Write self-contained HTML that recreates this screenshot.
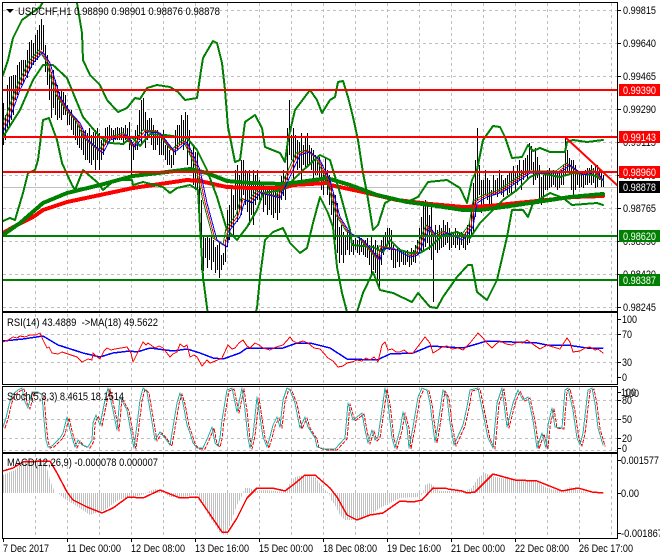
<!DOCTYPE html>
<html><head><meta charset="utf-8"><style>
html,body{margin:0;padding:0;background:#fff;width:660px;height:560px;overflow:hidden}
svg{display:block}
text{font-family:"Liberation Sans",sans-serif;font-size:11px;fill:#000}
.w{fill:#fff}
.l{fill:none;stroke-linejoin:round;stroke-linecap:round;shape-rendering:crispEdges}
</style></head><body>
<svg width="660" height="560" viewBox="0 0 660 560" xmlns="http://www.w3.org/2000/svg">
<defs>
<clipPath id="cm"><rect x="3" y="3" width="614" height="308"/></clipPath>
<clipPath id="cs"><rect x="3" y="387" width="614" height="65"/></clipPath>
<pattern id="hp" x="3" y="0" width="2" height="10" patternUnits="userSpaceOnUse"><rect width="1" height="10" fill="#c0c0c0"/></pattern>
<polyline id="fast" class="l" points="3,132 10,118 20,90 33,63 43,52 50,63 60,97 70,112 80,123 88,140 103,153 110,140 127,135 135,147 147,132 160,133 175,152 187,142 197,163 200,170 207,203 217,240 227,247 230,230 240,217 245,200 252,203 260,193 280,198 287,183 300,155 310,152 320,160 328,177 330,180 340,217 350,233 363,240 380,260 383,248 397,250 410,257 418,255 430,227 437,237 447,233 463,240 473,227 477,203 487,197 503,192 520,180 530,173 560,173 570,165 583,175 597,172 603,180"/>
<polyline id="st" class="l" points="3,427 6,418 9,405 12,395 18,390 22,388 25,402 28,408 32,392 38,392 42,395 44,420 46,440 48,447 52,446 56,442 60,438 63,433 67,417 70,430 72,437 75,447 78,440 82,445 88,447 92,440 93,423 96,415 100,425 105,400 108,388 113,410 117,430 120,397 127,410 132,438 134,448 137,425 140,400 143,388 147,392 150,410 155,440 160,432 165,438 170,445 173,427 177,403 180,393 183,403 187,425 190,433 193,443 197,448 203,448 208,437 212,427 215,443 218,446 220,438 222,420 227,390 232,388 237,412 242,388 245,410 248,438 250,448 253,435 257,397 260,417 263,437 267,447 270,437 273,425 277,417 280,427 283,400 287,388 290,390 295,403 300,428 305,417 308,427 315,438 317,447 325,449 335,449 345,438 348,403 353,420 362,413 365,430 368,443 372,430 375,440 378,437 382,410 385,388 388,403 392,438 395,448 400,430 403,412 407,427 409,448 413,427 418,397 422,388 427,390 430,403 433,427 435,442 438,425 443,390 447,397 450,423 454,445 463,425 467,407 470,390 478,388 483,413 488,438 493,448 497,403 502,388 507,427 513,403 518,390 523,400 528,397 533,420 537,448 542,433 546,448 548,425 552,408 555,427 562,428 565,390 568,388 573,410 577,438 580,445 583,433 588,390 592,388 595,403 598,428 603,445"/>
</defs>
<rect width="660" height="560" fill="#fff"/>

<!-- grid -->
<g stroke="#c0c0c0" stroke-width="1" stroke-dasharray="3 3" fill="none">
<path d="M35.5 3V311M67.5 3V311M99.5 3V311M131.5 3V311M163.5 3V311M195.5 3V311M227.5 3V311M259.5 3V311M291.5 3V311M323.5 3V311M355.5 3V311M387.5 3V311M419.5 3V311M451.5 3V311M483.5 3V311M515.5 3V311M547.5 3V311M579.5 3V311M611.5 3V311"/>
<path d="M3 10.5H617M3 43.5H617M3 76.5H617M3 109.5H617M3 142.5H617M3 175.5H617M3 208.5H617M3 241.5H617M3 274.5H617M3 307.5H617"/>
<path d="M35.5 314V384M67.5 314V384M99.5 314V384M131.5 314V384M163.5 314V384M195.5 314V384M227.5 314V384M259.5 314V384M291.5 314V384M323.5 314V384M355.5 314V384M387.5 314V384M419.5 314V384M451.5 314V384M483.5 314V384M515.5 314V384M547.5 314V384M579.5 314V384M611.5 314V384"/>
<path d="M3 334.5H617M3 362.5H617"/>
<path d="M35.5 387V452M67.5 387V452M99.5 387V452M131.5 387V452M163.5 387V452M195.5 387V452M227.5 387V452M259.5 387V452M291.5 387V452M323.5 387V452M355.5 387V452M387.5 387V452M419.5 387V452M451.5 387V452M483.5 387V452M515.5 387V452M547.5 387V452M579.5 387V452M611.5 387V452"/>
<path d="M3 400.5H617M3 419.5H617M3 438.5H617M3 450.5H617"/>
<path d="M35.5 454V538M67.5 454V538M99.5 454V538M131.5 454V538M163.5 454V538M195.5 454V538M227.5 454V538M259.5 454V538M291.5 454V538M323.5 454V538M355.5 454V538M387.5 454V538M419.5 454V538M451.5 454V538M483.5 454V538M515.5 454V538M547.5 454V538M579.5 454V538M611.5 454V538"/>
</g>
<path d="M3 187.5H617" stroke="#c0c0c0" stroke-width="1"/>

<g clip-path="url(#cm)">
<!-- price bars -->
<path stroke="#000" stroke-width="1" fill="none" d="M3.5 103V145M5.5 115V140M7.5 85V128M9.5 77V125M11.5 76V120M13.5 75V115M15.5 75V100M17.5 65V95M19.5 62V90M21.5 60V85M23.5 60V82M25.5 60V76M27.5 50V78M29.5 42V70M31.5 40V68M33.5 43V65M35.5 35V62M37.5 30V60M39.5 25V55M41.5 19V50M43.5 25V52M45.5 45V72M47.5 55V85M49.5 65V100M51.5 72V118M53.5 70V108M55.5 80V115M57.5 85V120M59.5 92V118M61.5 90V120M63.5 92V115M65.5 95V115M67.5 105V125M69.5 110V125M71.5 110V130M73.5 118V135M75.5 120V140M77.5 125V145M79.5 125V148M81.5 128V150M83.5 130V155M85.5 130V160M87.5 133V160M89.5 128V163M91.5 135V165M93.5 132V160M95.5 130V170M97.5 128V160M99.5 133V170M101.5 140V160M103.5 140V155M105.5 128V145M107.5 127V145M109.5 125V142M111.5 128V140M113.5 130V142M115.5 128V140M117.5 127V140M119.5 128V140M121.5 127V140M123.5 128V145M125.5 125V140M127.5 128V142M129.5 122V150M131.5 140V175M133.5 145V160M135.5 130V150M137.5 125V150M139.5 110V140M141.5 100V145M143.5 98V130M145.5 112V148M147.5 120V140M149.5 118V130M151.5 118V145M153.5 125V150M155.5 130V150M157.5 130V145M159.5 135V155M161.5 138V155M163.5 130V155M165.5 145V160M167.5 145V165M169.5 150V165M171.5 155V168M173.5 150V165M175.5 130V155M177.5 125V150M179.5 125V145M181.5 115V145M183.5 120V150M185.5 112V142M187.5 115V165M189.5 130V155M191.5 150V170M193.5 145V185M195.5 152V190M197.5 150V195M199.5 170V215M201.5 200V270M203.5 235V271M205.5 238V258M207.5 235V268M209.5 238V260M211.5 237V270M213.5 240V262M215.5 247V273M217.5 245V270M219.5 243V278M221.5 255V270M223.5 253V265M225.5 240V262M227.5 210V247M229.5 205V240M231.5 187V227M233.5 195V235M235.5 170V210M237.5 165V222M239.5 175V212M241.5 160V215M243.5 160V195M245.5 170V205M247.5 172V212M249.5 170V225M251.5 185V215M253.5 170V225M255.5 175V205M257.5 170V200M259.5 180V200M261.5 185V200M263.5 185V212M265.5 190V205M267.5 188V215M269.5 190V210M271.5 190V215M273.5 190V218M275.5 190V213M277.5 190V220M279.5 183V213M281.5 176V200M283.5 170V196M285.5 175V200M287.5 128V180M289.5 100V155M291.5 135V160M293.5 128V183M295.5 135V160M297.5 140V170M299.5 142V168M301.5 133V180M303.5 145V165M305.5 137V167M307.5 133V167M309.5 145V165M311.5 148V170M313.5 150V180M315.5 155V175M317.5 160V175M319.5 157V177M321.5 165V190M323.5 170V195M325.5 157V185M327.5 170V195M329.5 175V205M331.5 185V215M333.5 193V227M335.5 195V240M337.5 203V253M339.5 227V263M341.5 225V255M343.5 232V263M345.5 235V255M347.5 230V250M349.5 233V255M351.5 235V252M353.5 240V255M355.5 238V250M357.5 240V253M359.5 237V255M361.5 238V252M363.5 240V255M365.5 240V257M367.5 238V258M369.5 245V265M371.5 237V277M373.5 245V270M375.5 240V273M377.5 245V280M379.5 250V290M381.5 240V265M383.5 236V255M385.5 232V250M387.5 228V243M389.5 228V250M391.5 230V260M393.5 245V268M395.5 250V268M397.5 248V262M399.5 248V267M401.5 250V262M403.5 250V265M405.5 252V265M407.5 250V262M409.5 255V267M411.5 248V265M413.5 250V262M415.5 245V263M417.5 240V255M419.5 228V253M421.5 217V253M423.5 205V250M425.5 200V247M427.5 202V243M429.5 215V250M431.5 205V260M433.5 237V302M435.5 225V250M437.5 230V253M439.5 225V250M441.5 228V248M443.5 220V247M445.5 225V245M447.5 222V243M449.5 228V250M451.5 232V248M453.5 232V245M455.5 228V248M457.5 233V245M459.5 233V250M461.5 232V245M463.5 235V248M465.5 232V250M467.5 225V245M469.5 222V243M471.5 205V235M473.5 183V233M475.5 160V217M477.5 128V200M479.5 165V195M481.5 180V213M483.5 180V205M485.5 170V195M487.5 178V200M489.5 180V205M491.5 190V210M493.5 175V195M495.5 180V195M497.5 178V197M499.5 170V193M501.5 175V195M503.5 180V197M505.5 178V190M507.5 175V195M509.5 172V193M511.5 173V193M513.5 166V185M515.5 172V190M517.5 165V185M519.5 160V180M521.5 170V190M523.5 160V180M525.5 158V175M527.5 155V180M529.5 143V172M531.5 146V170M533.5 162V185M535.5 148V180M537.5 157V178M539.5 165V200M541.5 177V205M543.5 175V200M545.5 172V190M547.5 170V190M549.5 168V188M551.5 172V187M553.5 170V185M555.5 172V187M557.5 173V190M559.5 173V188M561.5 170V185M563.5 165V185M565.5 137V175M567.5 150V172M569.5 158V175M571.5 160V190M573.5 160V197M575.5 165V190M577.5 170V185M579.5 172V188M581.5 173V187M583.5 172V188M585.5 170V185M587.5 168V185M589.5 168V183M591.5 165V185M593.5 168V183M595.5 165V188M597.5 165V187M599.5 170V180M601.5 173V187M603.5 175V187"/>

<!-- thick MAs -->
<polyline class="l" stroke="#f00" stroke-width="4" points="3,233 17,225 33,217 43,210 67,202 100,195 133,188 167,183 187,180 200,181 213,184 227,187 250,188 283,188 293,185 327,183 330,185 363,192 397,200 430,204 463,207 490,206 517,203 547,200 573,197 603,196"/>
<polyline class="l" stroke="#008000" stroke-width="4" points="3,235 20,223 43,203 67,193 100,185 133,176 167,172 190,169 207,173 227,181 250,183 283,184 300,182 328,178 330,179 350,185 377,195 407,202 430,205 463,210 480,210 503,207 537,202 570,197 603,194"/>

<!-- Bollinger -->
<g stroke="#008000" stroke-width="2">
<polyline class="l" points="3,75 8,60 13,38 22,20 40,7 50,-10 70,-10 77,3 82,33 83,60 90,75 100,85 107,100 118,112 127,108 135,98 140,99 147,88 157,85 170,87 178,92 185,100 197,98 200,77 203,58 213,41 217,43 222,63 225,90 228,127 235,162 240,160 245,122 255,115 262,128 265,147 280,153 285,162 288,140 295,110 310,90 317,100 322,113 330,100 335,97 338,82 343,81 348,97 353,117 358,140 363,173 367,193 373,230 378,225 385,203 392,199 407,202 418,197 428,182 447,180 460,188 467,203 472,180 477,170 483,140 493,126 500,127 505,137 512,158 522,157 528,145 533,151 540,148 550,152 565,152 567,142 573,140 587,142 603,140"/>
<polyline class="l" points="3,221 10,218 15,220 23,193 28,173 35,170 38,160 43,120 49,118 57,140 62,163 72,185 75,190 83,170 97,182 103,190 115,180 132,180 133,185 143,182 163,187 170,193 177,188 190,185 198,190 200,227 203,277 208,315 255,315 257,308 260,277 265,240 273,232 283,228 290,243 300,253 307,248 313,223 320,197 328,213 333,227 337,267 342,293 347,312 357,312 363,293 373,272 380,290 393,293 412,302 418,293 430,307 437,308 443,297 457,277 468,265 472,265 477,292 487,300 497,280 507,237 512,210 523,210 528,217 533,203 550,193 563,198 572,205 597,203 603,205"/>
<polyline class="l" points="3,137 20,110 33,80 43,65 53,65 67,78 83,117 100,137 110,143 123,144 132,137 140,146 150,134 165,135 187,138 197,150 207,170 217,197 227,230 237,240 247,227 257,210 263,193 283,190 300,173 320,155 330,160 340,193 350,230 352,245 373,247 383,252 390,240 400,250 410,253 420,253 430,247 443,235 457,232 470,238 480,223 493,210 503,200 517,190 530,177 540,173 560,177 573,173 593,175 603,180"/>
</g>

<!-- fast MAs -->
<use href="#fast" stroke="#008000" stroke-width="1" transform="translate(-4,-2)"/>
<use href="#fast" stroke="#f00" stroke-width="1" transform="translate(-2,-1)"/>
<use href="#fast" stroke="#00f" stroke-width="1"/>

<!-- hlines -->
<path stroke="#f00" stroke-width="2" d="M3 90H617M3 137H617M3 172H617"/>
<path stroke="#008000" stroke-width="2" d="M3 236H617M3 280H617"/>
<path stroke="#f00" stroke-width="2" d="M565 137L618 186"/>
</g>

<!-- RSI -->
<polyline class="l" stroke="#00f" stroke-width="1.5" points="3,341 23,339 43,336 58,345 83,353 100,357 113,353 130,351 137,352 150,348 173,351 187,349 200,353 213,358 223,359 240,353 247,348 283,348 297,343 310,343 330,348 347,359 377,360 390,354 413,353 430,346 463,348 487,341 537,343 547,345 567,345 587,348 603,348"/>
<polyline class="l" stroke="#f00" stroke-width="1" points="3,342 8,340 13,337 17,338 20,336 25,337 30,335 36,335 40,333 43,340 47,348 49,347 52,353 58,354 62,352 68,354 77,357 82,362 88,359 92,360 93,353 96,356 100,359 104,351 107,348 111,350 115,349 121,348 127,347 131,353 133,362 138,352 143,342 146,345 148,343 155,348 159,346 163,348 170,357 173,354 177,352 180,344 184,347 187,345 190,357 194,355 197,357 202,366 207,360 210,363 213,362 222,358 228,345 232,349 235,348 239,343 243,340 247,346 250,348 255,343 259,345 263,348 270,350 276,347 283,345 290,337 293,341 297,343 303,341 308,343 314,348 320,349 328,358 333,361 338,367 343,366 347,363 352,362 357,360 362,361 366,358 370,360 374,357 378,362 382,345 385,342 388,350 392,349 396,352 400,352 404,350 408,353 413,353 419,345 425,337 430,343 433,353 438,350 442,347 447,346 452,349 458,348 463,350 470,343 478,333 483,338 488,344 492,348 496,344 500,341 506,344 512,345 518,342 523,343 527,340 534,345 540,349 547,345 553,347 560,349 567,338 570,342 573,352 580,351 585,348 590,347 595,350 598,349 603,353"/>

<!-- Stoch -->
<g clip-path="url(#cs)">
<use href="#st" stroke="#f00" stroke-width="1" stroke-dasharray="3 2" transform="translate(2,1)"/>
<use href="#st" stroke="#20b2aa" stroke-width="1"/>
</g>

<!-- MACD -->
<polygon fill="url(#hp)" points="3,493 3,475 15,470 25,460 45,460 50,480 55,493 58,493 65,499 75,505 90,515 105,510 118,500 125,498 135,497 145,494 150,491 155,489 160,490 164,493 170,497 185,497 192,495 198,495 200,500 210,518 215,525 220,533 225,535 230,525 237,505 241,498 243,493 245,488 250,488 255,491 265,490 275,491 285,492 290,483 295,477 305,475 315,477 325,490 329,493 331,500 335,505 340,515 345,520 360,520 370,515 380,508 390,503 400,498 420,497 423,493 425,485 430,483 436,488 440,491 465,491 472,488 478,478 485,473 495,477 510,479 535,480 545,487 555,490 565,490 570,487 578,490 590,493 600,493"/>
<polyline class="l" stroke="#f00" stroke-width="1.5" points="3,471 13,468 23,462 50,461 57,473 67,492 73,500 87,507 102,513 113,508 128,497 143,498 160,490 180,498 198,497 207,510 222,532 228,532 237,518 247,498 257,488 272,488 285,491 293,485 305,475 315,475 330,488 337,497 347,515 357,520 370,515 383,513 400,501 413,502 422,500 433,488 445,488 448,489 462,491 467,493 475,492 493,474 515,480 537,481 562,491 578,488 592,492 603,493"/>

<!-- frames -->
<g fill="none" stroke="#000" stroke-width="1">
<rect x="2.5" y="2.5" width="615" height="309"/>
<rect x="2.5" y="312.5" width="615" height="72"/>
<rect x="2.5" y="386.5" width="615" height="66"/>
<rect x="2.5" y="453.5" width="615" height="85"/>
<path d="M618 10.5H621M618 43.5H621M618 76.5H621M618 109.5H621M618 142.5H621M618 175.5H621M618 208.5H621M618 241.5H621M618 274.5H621M618 307.5H621M618 319.5H621M618 334.5H621M618 362.5H621M618 377.5H621M618 392.5H621M618 400.5H621M618 419.5H621M618 438.5H621M618 448.5H621M618 460.5H621M618 493.5H621M618 533.5H621"/>
<path d="M3.5 539V542M67.5 539V542M131.5 539V542M195.5 539V542M259.5 539V542M323.5 539V542M387.5 539V542M451.5 539V542M515.5 539V542M579.5 539V542"/>
</g>

<!-- titles -->
<path d="M6 9H14L10 13Z" fill="#000"/>
<text x="18" y="15" textLength="202" lengthAdjust="spacingAndGlyphs">USDCHF,H1  0.98890 0.98901 0.98876 0.98878</text>
<text x="7" y="326" textLength="151" lengthAdjust="spacingAndGlyphs" xml:space="preserve">RSI(14) 43.4889  -&gt;MA(18) 49.5622</text>
<text x="7" y="400" textLength="117" lengthAdjust="spacingAndGlyphs">Stoch(5,3,3) 8.4615 18.1514</text>
<text x="7" y="466" textLength="151" lengthAdjust="spacingAndGlyphs">MACD(12,26,9) -0.000078 0.000007</text>

<!-- axis -->
<g lengthAdjust="spacingAndGlyphs">
<text x="623" y="14" textLength="33" lengthAdjust="spacingAndGlyphs">0.99815</text>
<text x="623" y="47" textLength="33" lengthAdjust="spacingAndGlyphs">0.99640</text>
<text x="623" y="80" textLength="33" lengthAdjust="spacingAndGlyphs">0.99465</text>
<text x="623" y="113" textLength="33" lengthAdjust="spacingAndGlyphs">0.99290</text>
<text x="623" y="146" textLength="33" lengthAdjust="spacingAndGlyphs">0.99115</text>
<text x="623" y="179" textLength="33" lengthAdjust="spacingAndGlyphs">0.98940</text>
<text x="623" y="212" textLength="33" lengthAdjust="spacingAndGlyphs">0.98765</text>
<text x="623" y="245" textLength="33" lengthAdjust="spacingAndGlyphs">0.98590</text>
<text x="623" y="278" textLength="33" lengthAdjust="spacingAndGlyphs">0.98420</text>
<text x="623" y="311" textLength="33" lengthAdjust="spacingAndGlyphs">0.98245</text>
</g>

<rect x="619" y="84" width="41" height="12" fill="#f00"/><text class="w" x="623" y="94" textLength="33" lengthAdjust="spacingAndGlyphs">0.99390</text>
<rect x="619" y="131" width="41" height="12" fill="#f00"/><text class="w" x="623" y="141" textLength="33" lengthAdjust="spacingAndGlyphs">0.99143</text>
<rect x="619" y="166" width="41" height="12" fill="#f00"/><text class="w" x="623" y="176" textLength="33" lengthAdjust="spacingAndGlyphs">0.98960</text>
<rect x="619" y="181" width="41" height="12" fill="#000"/><text class="w" x="623" y="191" textLength="33" lengthAdjust="spacingAndGlyphs">0.98878</text>
<rect x="619" y="230" width="41" height="12" fill="#008000"/><text class="w" x="623" y="240" textLength="33" lengthAdjust="spacingAndGlyphs">0.98620</text>
<rect x="619" y="274" width="41" height="12" fill="#008000"/><text class="w" x="623" y="284" textLength="33" lengthAdjust="spacingAndGlyphs">0.98387</text>

<text x="622" y="323" textLength="15" lengthAdjust="spacingAndGlyphs">100</text>
<text x="622" y="338" textLength="10" lengthAdjust="spacingAndGlyphs">70</text>
<text x="622" y="366" textLength="10" lengthAdjust="spacingAndGlyphs">30</text>
<text x="622" y="381" textLength="5" lengthAdjust="spacingAndGlyphs">0</text>
<text x="621" y="396" textLength="15" lengthAdjust="spacingAndGlyphs">100</text>
<text x="624" y="397" textLength="15" lengthAdjust="spacingAndGlyphs">100</text>
<text x="622" y="404" textLength="10" lengthAdjust="spacingAndGlyphs">80</text>
<text x="622" y="423" textLength="10" lengthAdjust="spacingAndGlyphs">50</text>
<text x="622" y="442" textLength="10" lengthAdjust="spacingAndGlyphs">20</text>
<text x="622" y="452" textLength="5" lengthAdjust="spacingAndGlyphs">0</text>
<text x="621" y="464" textLength="38" lengthAdjust="spacingAndGlyphs">0.001577</text>
<text x="621" y="497" textLength="18" lengthAdjust="spacingAndGlyphs">0.00</text>
<text x="621" y="537" textLength="42" lengthAdjust="spacingAndGlyphs">-0.001867</text>

<text x="3" y="552" textLength="46" lengthAdjust="spacingAndGlyphs">7 Dec 2017</text>
<text x="67" y="552" textLength="54" lengthAdjust="spacingAndGlyphs">11 Dec 00:00</text>
<text x="131" y="552" textLength="54" lengthAdjust="spacingAndGlyphs">12 Dec 08:00</text>
<text x="195" y="552" textLength="54" lengthAdjust="spacingAndGlyphs">13 Dec 16:00</text>
<text x="259" y="552" textLength="54" lengthAdjust="spacingAndGlyphs">15 Dec 00:00</text>
<text x="323" y="552" textLength="54" lengthAdjust="spacingAndGlyphs">18 Dec 08:00</text>
<text x="387" y="552" textLength="54" lengthAdjust="spacingAndGlyphs">19 Dec 16:00</text>
<text x="451" y="552" textLength="54" lengthAdjust="spacingAndGlyphs">21 Dec 00:00</text>
<text x="515" y="552" textLength="54" lengthAdjust="spacingAndGlyphs">22 Dec 08:00</text>
<text x="579" y="552" textLength="54" lengthAdjust="spacingAndGlyphs">26 Dec 17:00</text>
</svg>
</body></html>
